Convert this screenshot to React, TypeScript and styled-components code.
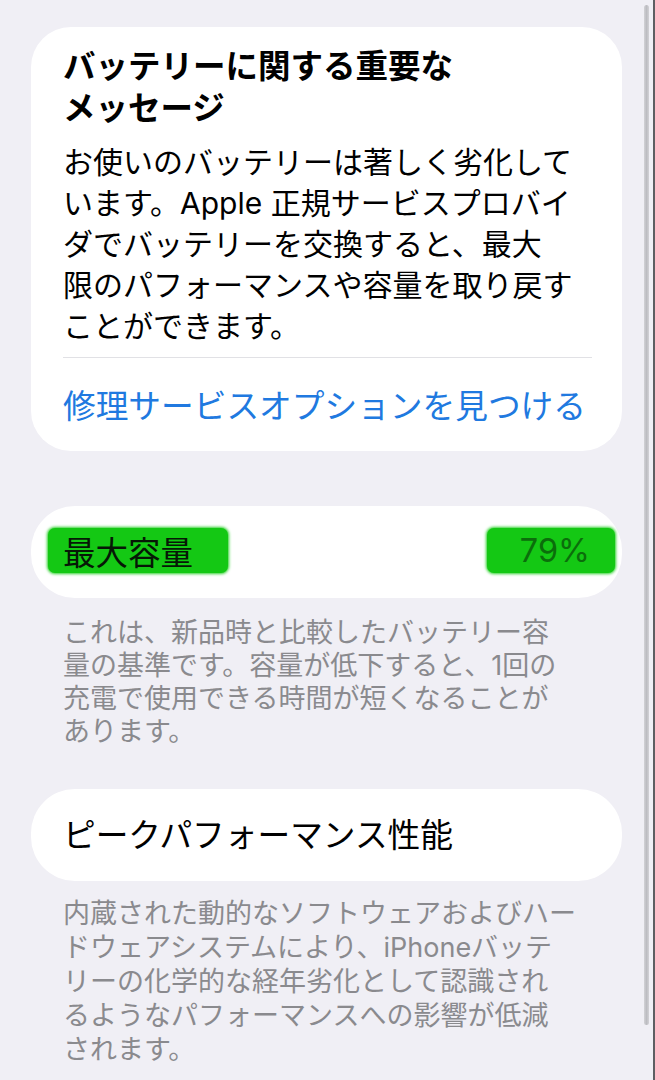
import styled, { createGlobalStyle } from 'styled-components';

const GlobalStyle = createGlobalStyle`
  html,
  body {
    margin: 0;
    padding: 0;
    background: #f0eff5;
  }

  body {
    font-family: 'Inter', 'Noto Sans CJK JP', sans-serif;
    color: #000;
    -webkit-font-smoothing: antialiased;
  }
`;

const App = () => {
  return (
    <>
      <GlobalStyle />
      <StyledPage>
        <StyledContent>
          <StyledMessageCard>
            <StyledTitle>
              バッテリーに関する重要な
              <br />
              メッセージ
            </StyledTitle>
            <StyledBody>
              お使いのバッテリーは著しく劣化して
              <br />
              います。Apple 正規サービスプロバイ
              <br />
              ダでバッテリーを交換すると、最大
              <br />
              限のパフォーマンスや容量を取り戻す
              <br />
              ことができます。
            </StyledBody>
            <StyledDivider />
            <StyledLink>修理サービスオプションを見つける</StyledLink>
          </StyledMessageCard>

          <StyledRowCard $marginTop={55}>
            <StyledHighlight $left={15} $right={35} $color="#061806">
              最大容量
            </StyledHighlight>
            <StyledHighlight $left={33} $right={25} $color="#0b6e0b" $alignEnd>
              79%
            </StyledHighlight>
          </StyledRowCard>
          <StyledCaption $marginTop={18} $lineHeight={33}>
            これは、新品時と比較したバッテリー容
            <br />
            量の基準です。容量が低下すると、1回の
            <br />
            充電で使用できる時間が短くなることが
            <br />
            あります。
          </StyledCaption>

          <StyledRowCard $marginTop={41}>
            <StyledRowLabel>ピークパフォーマンス性能</StyledRowLabel>
          </StyledRowCard>
          <StyledCaption $marginTop={16} $lineHeight={34}>
            内蔵された動的なソフトウェアおよびハー
            <br />
            ドウェアシステムにより、iPhoneバッテ
            <br />
            リーの化学的な経年劣化として認識され
            <br />
            るようなパフォーマンスへの影響が低減
            <br />
            されます。
          </StyledCaption>
        </StyledContent>

        <StyledGutter>
          <StyledScrollbar />
        </StyledGutter>
      </StyledPage>
    </>
  );
};

export default App;

/** STYLED COMPONENTS  **/

const StyledPage = styled.div`
  display: flex;
  width: 655px;
  height: 1080px;
  overflow: hidden;
  background: #f0eff5;
`;

const StyledContent = styled.div`
  display: flex;
  flex-direction: column;

  width: 622px;
  padding: 27px 0 0 31px;
  box-sizing: border-box;
`;

const StyledMessageCard = styled.div`
  display: flex;
  flex-direction: column;

  padding: 19px 32px 24px;
  border-radius: 40px;
  background: #ffffff;
`;

const StyledTitle = styled.h2`
  margin: 0;

  font-size: 32.5px;
  font-weight: 700;
  line-height: 42px;
  color: #000;
`;

const StyledBody = styled.p`
  margin: 12px 0 0;

  font-size: 30px;
  font-weight: 400;
  line-height: 41px;
  color: #000;
  white-space: nowrap;
`;

const StyledDivider = styled.div`
  height: 1px;
  margin: 10px -2px 0 0;
  background: #e1e1e5;
`;

const StyledLink = styled.a`
  margin-top: 27px;

  font-size: 32.7px;
  line-height: 42px;
  color: #2079e0;
  cursor: pointer;
`;

const StyledRowCard = styled.div<{ $marginTop: number }>`
  display: flex;
  align-items: center;
  justify-content: space-between;

  height: 92px;
  margin-top: ${({ $marginTop }) => $marginTop}px;
  padding: 0 32px;
  box-sizing: border-box;

  border-radius: 44px;
  background: #ffffff;
`;

const StyledRowLabel = styled.span`
  font-size: 32.7px;
  line-height: 42px;
  color: #000;
`;

const StyledHighlight = styled.span<{
  $left: number;
  $right: number;
  $color: string;
  $alignEnd?: boolean;
}>`
  display: inline-flex;
  align-items: center;

  height: 45px;
  margin-top: -4px;
  padding: 0 ${({ $right }) => $right}px 0 ${({ $left }) => $left}px;
  ${({ $alignEnd, $right }) =>
    $alignEnd ? `margin-right: -${$right}px;` : 'margin-left: -15px;'}

  border-radius: 7px;
  background: #14c814;
  box-shadow: 0 0 3px 1px #2bd02b;

  font-size: 32.5px;
  color: ${({ $color }) => $color};
`;

const StyledCaption = styled.p<{ $marginTop: number; $lineHeight: number }>`
  margin: ${({ $marginTop }) => $marginTop}px 0 0;
  padding-left: 32px;

  font-size: 27px;
  line-height: ${({ $lineHeight }) => $lineHeight}px;
  color: #8a8a8e;
  white-space: nowrap;
`;

const StyledGutter = styled.div`
  display: flex;
  flex: 1;
  border-right: 2px solid #5e5e62;
`;

const StyledScrollbar = styled.div`
  width: 5px;
  height: 1020px;
  margin: 5px 0 0 22px;

  border-radius: 3px;
  background: linear-gradient(90deg, #d2d2d6, #bcbcc1 50%, #d2d2d6);
`;
